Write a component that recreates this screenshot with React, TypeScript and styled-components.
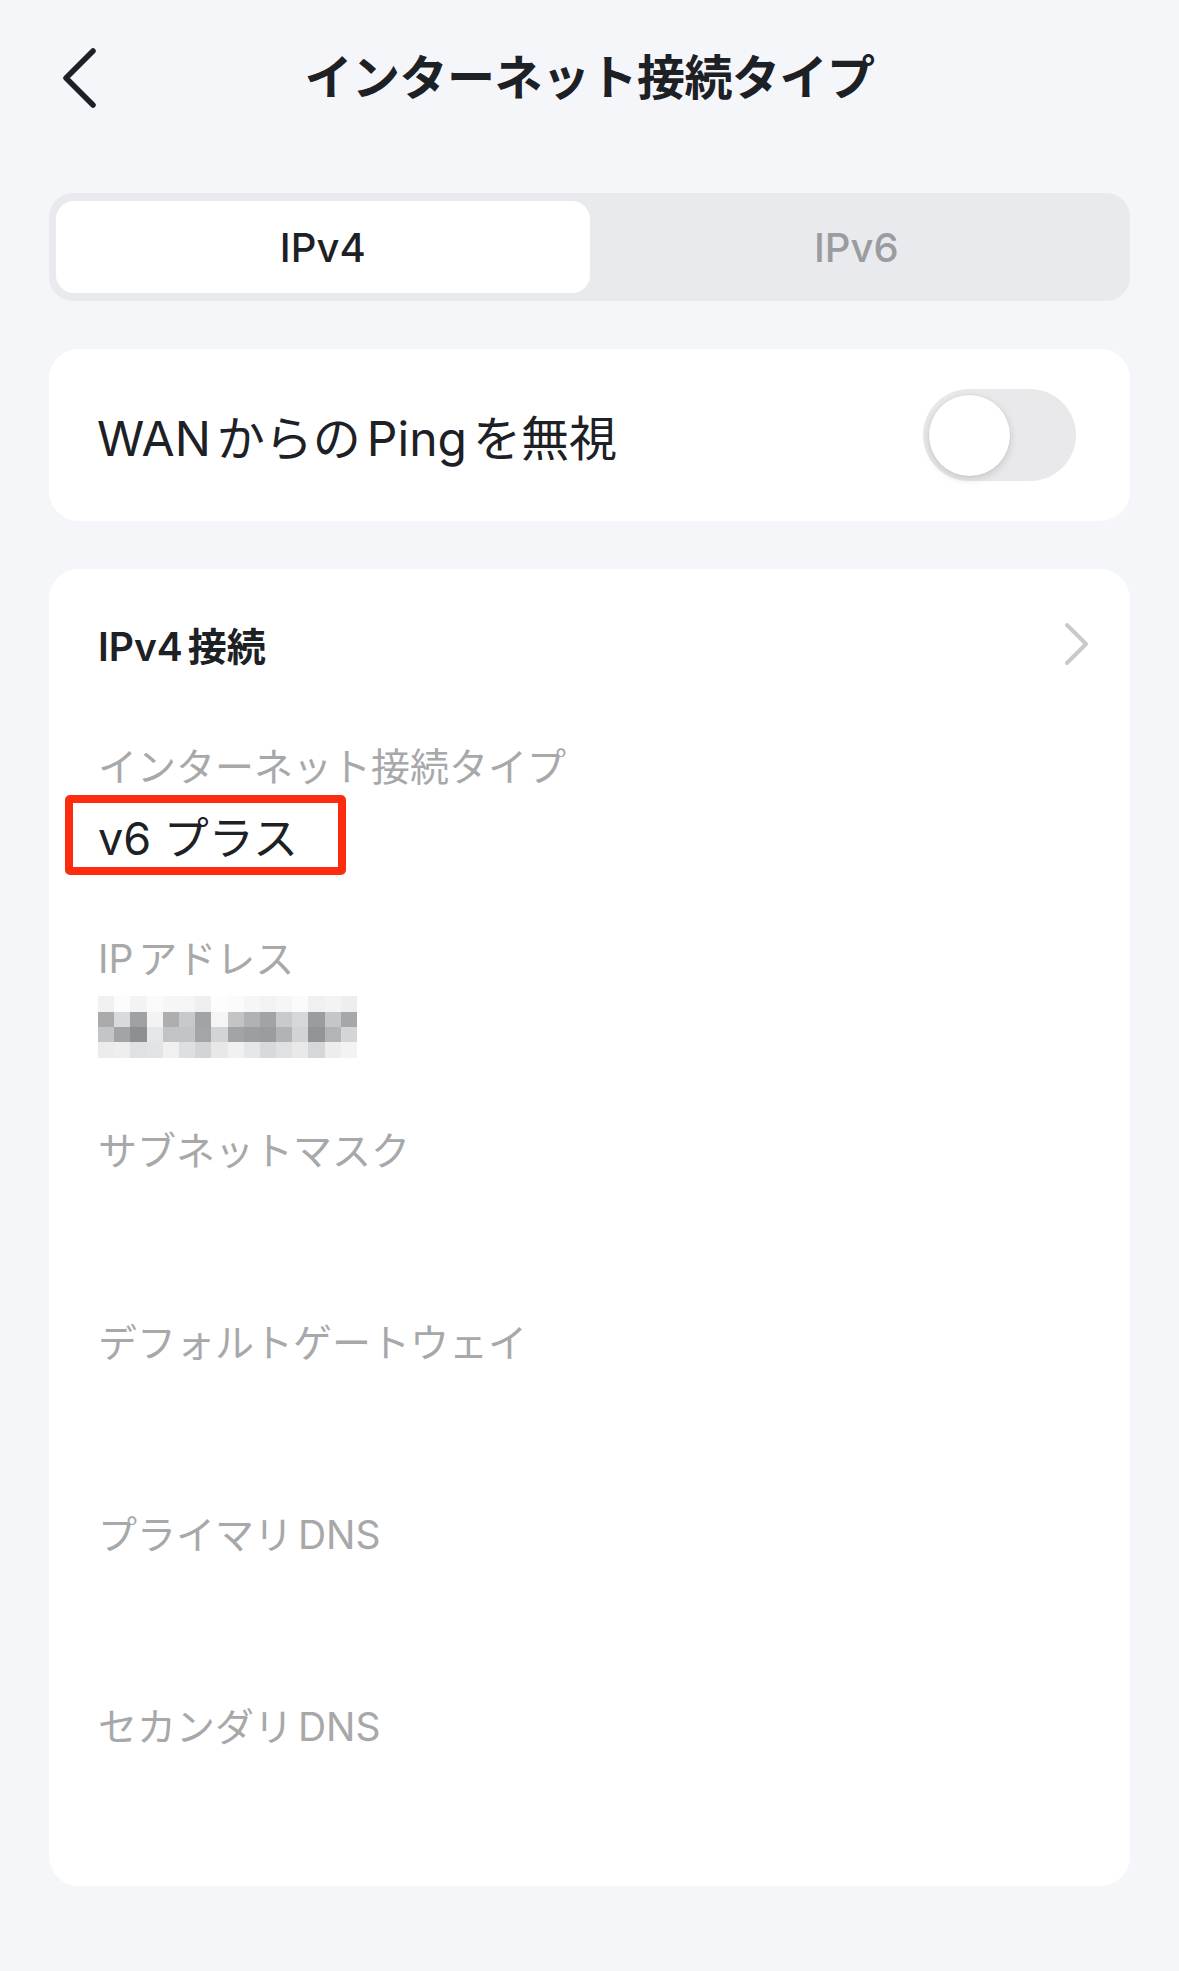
import React from "react";
import styled, { createGlobalStyle } from "styled-components";

const GlobalStyle = createGlobalStyle`
  html, body {
    margin: 0;
    padding: 0;
    background: #f5f6fa;
  }
  body {
    font-family: Inter, "Noto Sans CJK JP", sans-serif;
    color: #1d2024;
    -webkit-font-smoothing: antialiased;
    text-autospace: normal;
  }
`;

const Page = styled.div`
  width: 1179px;
  min-height: 1971px;
  box-sizing: border-box;
  padding: 0 49px;
  background: #f5f6fa;
  display: flex;
  flex-direction: column;
`;

const Header = styled.header`
  height: 156px;
  display: grid;
  grid-template-columns: 1fr auto 1fr;
  align-items: center;
`;

const BackButton = styled.button`
  justify-self: start;
  border: none;
  background: none;
  padding: 0;
  margin-left: 12px;
  display: flex;
  cursor: pointer;
`;

const Title = styled.h1`
  margin: 0;
  font-size: 48px;
  font-weight: 700;
  line-height: 60px;
  color: #1d2024;
  letter-spacing: -0.5px;
`;

const Segmented = styled.div`
  margin-top: 37px;
  height: 108px;
  box-sizing: border-box;
  padding: 8px 7px;
  border-radius: 24px;
  background: #e9eaee;
  display: grid;
  grid-template-columns: 1fr 1fr;
`;

const Segment = styled.div<{ $active?: boolean }>`
  display: flex;
  align-items: center;
  justify-content: center;
  border-radius: 18px;
  background: ${(p) => (p.$active ? "#ffffff" : "transparent")};
  color: ${(p) => (p.$active ? "#1d2024" : "#9b9c9e")};
  font-size: 40px;
  font-weight: 500;
`;

const Card = styled.section`
  margin-top: 48px;
  background: #ffffff;
  border-radius: 30px;
`;

const PingRow = styled.div`
  height: 172px;
  box-sizing: border-box;
  padding: 0 54px 0 48px;
  display: flex;
  align-items: center;
  justify-content: space-between;
`;

const PingText = styled.span`
  font-size: 48px;
  font-weight: 400;
  color: #1d2024;
`;

const Toggle = styled.div`
  width: 153px;
  height: 92px;
  box-sizing: border-box;
  padding: 0 6px;
  border-radius: 46px;
  background: #e9e9eb;
  display: flex;
  align-items: center;
`;

const Knob = styled.div`
  width: 81px;
  height: 81px;
  border-radius: 50%;
  background: #ffffff;
  box-shadow: 0 3px 8px rgba(0, 0, 0, 0.14), 0 0 0 1px rgba(0, 0, 0, 0.03);
`;

const InfoCard = styled(Card)`
  padding: 0 39px 48px 49px;
  display: flex;
  flex-direction: column;
`;

const InfoHeader = styled.div`
  height: 150px;
  display: flex;
  align-items: center;
  justify-content: space-between;
`;

const InfoTitle = styled.span`
  font-size: 39px;
  font-weight: 600;
  color: #1d2024;
`;

const Rows = styled.div`
  margin-top: 23px;
  display: flex;
  flex-direction: column;
  gap: 56px;
`;

const Row = styled.div`
  display: flex;
  flex-direction: column;
`;

const Label = styled.div`
  font-size: 39px;
  line-height: 50px;
  color: #a7a8aa;
`;

const Value = styled.div`
  height: 86px;
  display: flex;
  align-items: center;
  color: #1d2024;
`;

const Highlight = styled.span`
  height: 80px;
  box-sizing: border-box;
  margin-left: -33px;
  padding: 0 40px 0 25px;
  border: 8px solid #fe2c0e;
  border-radius: 5px;
  display: inline-flex;
  align-items: center;
  font-size: 45px;
`;

const Mosaic = styled.div`
  display: grid;
  grid-template-columns: repeat(16, 16.2px);
  grid-auto-rows: 15.3px;
  filter: blur(0.6px);
`;

const Cell = styled.div<{ $shade: string }>`
  background: ${(p) => p.$shade};
`;

const mosaic = [
  ["#f1f1f2", "#fcfcfc", "#f3f3f4", "#fafafa", "#f6f6f6", "#f5f5f6", "#efeff0", "#fdfdfd", "#fbfbfb", "#f6f6f7", "#f3f3f4", "#f6f6f7", "#fbfbfb", "#f0f0f1", "#f3f3f4", "#eeeeef"],
  ["#a9aaac", "#d9dadb", "#9fa1a4", "#f3f3f4", "#adaeb0", "#c8c9cb", "#a1a3a5", "#f5f5f6", "#c3c4c6", "#b1b2b4", "#a1a3a5", "#c9cacc", "#d6d7d8", "#9a9c9f", "#c5c6c8", "#a5a7a9"],
  ["#c4c5c7", "#a2a4a6", "#8d8f92", "#e5e6e7", "#c2c3c5", "#c3c4c6", "#a3a5a7", "#d3d4d5", "#a2a4a6", "#9c9ea1", "#9a9c9f", "#b1b3b5", "#d2d3d4", "#929497", "#b2b4b6", "#d4d5d6"],
  ["#ececed", "#eeeeef", "#e0e1e2", "#e3e4e5", "#f0f0f1", "#dedfe0", "#d3d4d5", "#e8e8e9", "#f1f1f2", "#e6e7e8", "#d8d9da", "#e0e1e2", "#e9e9ea", "#d6d7d8", "#ededee", "#f3f3f4"],
];

const BackIcon = () => (
  <svg width="36" height="62" viewBox="0 0 36 62" fill="none">
    <path d="M32 4 L5 31 L32 58" stroke="#1d2024" strokeWidth="5.5" strokeLinecap="round" strokeLinejoin="round" />
  </svg>
);

const ChevronIcon = () => (
  <svg width="28" height="44" viewBox="0 0 28 44" fill="none">
    <path d="M4 3 L23 22 L4 41" stroke="#c9c9cb" strokeWidth="4" strokeLinecap="round" strokeLinejoin="round" />
  </svg>
);

const fields = [
  { label: "インターネット接続タイプ", value: "highlight" },
  { label: "IPアドレス", value: "mosaic" },
  { label: "サブネットマスク", value: "" },
  { label: "デフォルトゲートウェイ", value: "" },
  { label: "プライマリDNS", value: "" },
  { label: "セカンダリDNS", value: "" },
];

export default function App() {
  return (
    <>
      <GlobalStyle />
      <Page>
        <Header>
          <BackButton>
            <BackIcon />
          </BackButton>
          <Title>インターネット接続タイプ</Title>
          <span />
        </Header>

        <Segmented>
          <Segment $active>IPv4</Segment>
          <Segment>IPv6</Segment>
        </Segmented>

        <Card>
          <PingRow>
            <PingText>WANからのPingを無視</PingText>
            <Toggle>
              <Knob />
            </Toggle>
          </PingRow>
        </Card>

        <InfoCard>
          <InfoHeader>
            <InfoTitle>IPv4接続</InfoTitle>
            <ChevronIcon />
          </InfoHeader>
          <Rows>
            {fields.map((f) => (
              <Row key={f.label}>
                <Label>{f.label}</Label>
                <Value>
                  {f.value === "highlight" && <Highlight>v6 プラス</Highlight>}
                  {f.value === "mosaic" && (
                    <Mosaic>
                      {mosaic.flat().map((c, i) => (
                        <Cell key={i} $shade={c} />
                      ))}
                    </Mosaic>
                  )}
                </Value>
              </Row>
            ))}
          </Rows>
        </InfoCard>
      </Page>
    </>
  );
}
